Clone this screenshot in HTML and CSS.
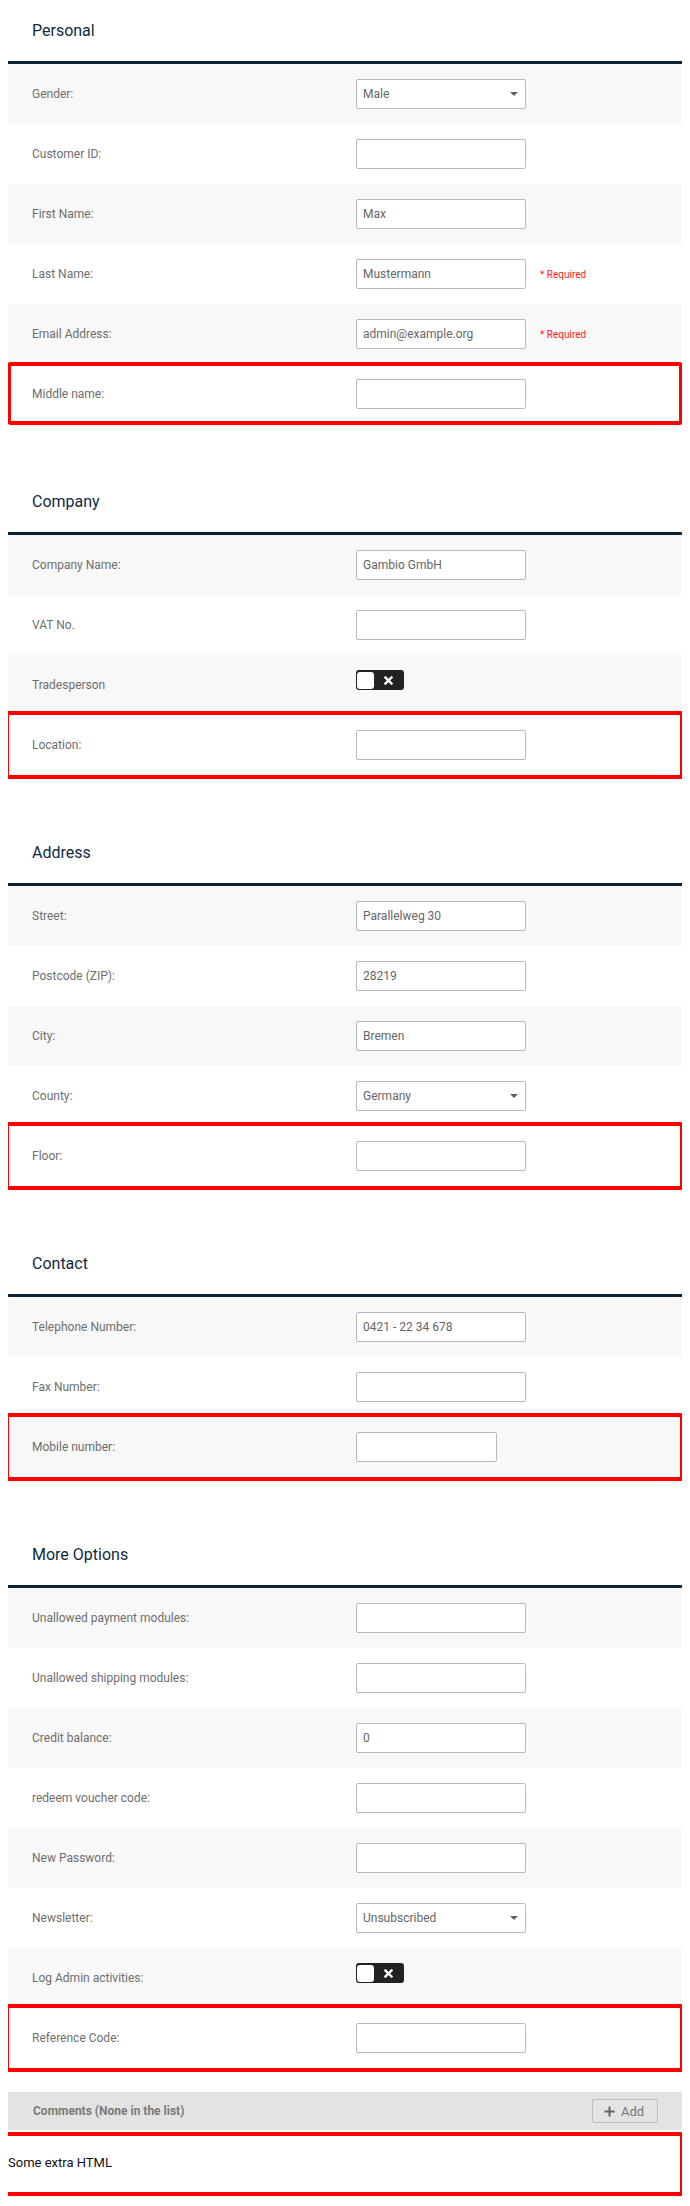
FILE: index.html
```html
<!DOCTYPE html>
<html lang="en">
<head>
<meta charset="utf-8">
<title>Customer</title>
<link rel="stylesheet" href="styles.css">
</head>
<body>
<section class="section">
  <h2 class="section-title">Personal</h2>
  <div class="row gray"><label class="label">Gender:</label><div class="field"><div class="select"><span>Male</span><span class="caret"></span></div></div></div>
  <div class="row"><label class="label">Customer ID:</label><div class="field"><div class="input"></div></div></div>
  <div class="row gray"><label class="label">First Name:</label><div class="field"><div class="input">Max</div></div></div>
  <div class="row"><label class="label">Last Name:</label><div class="field"><div class="input">Mustermann</div><span class="required">* Required</span></div></div>
  <div class="row gray"><label class="label">Email Address:</label><div class="field"><div class="input">admin@example.org</div><span class="required">* Required</span></div></div>
  <div class="row hl hl-a"><label class="label">Middle name:</label><div class="field"><div class="input"></div></div></div>
</section>

<section class="section">
  <h2 class="section-title">Company</h2>
  <div class="row gray"><label class="label">Company Name:</label><div class="field"><div class="input">Gambio GmbH</div></div></div>
  <div class="row"><label class="label">VAT No.</label><div class="field"><div class="input"></div></div></div>
  <div class="row gray"><label class="label">Tradesperson</label><div class="field top"><div class="toggle"><span class="knob"></span><svg class="x" width="9" height="9" viewBox="0 0 9 9"><path d="M1.5 1.5L7.5 7.5M7.5 1.5L1.5 7.5" stroke="#fff" stroke-width="2.4" stroke-linecap="square"/></svg></div></div></div>
  <div class="row hl"><label class="label">Location:</label><div class="field"><div class="input"></div></div></div>
</section>

<section class="section">
  <h2 class="section-title">Address</h2>
  <div class="row gray"><label class="label">Street:</label><div class="field"><div class="input">Parallelweg 30</div></div></div>
  <div class="row"><label class="label">Postcode (ZIP):</label><div class="field"><div class="input">28219</div></div></div>
  <div class="row gray"><label class="label">City:</label><div class="field"><div class="input">Bremen</div></div></div>
  <div class="row"><label class="label">County:</label><div class="field"><div class="select"><span>Germany</span><span class="caret"></span></div></div></div>
  <div class="row hl"><label class="label">Floor:</label><div class="field"><div class="input"></div></div></div>
</section>

<section class="section">
  <h2 class="section-title">Contact</h2>
  <div class="row gray"><label class="label">Telephone Number:</label><div class="field"><div class="input">0421 - 22 34 678</div></div></div>
  <div class="row"><label class="label">Fax Number:</label><div class="field"><div class="input"></div></div></div>
  <div class="row gray hl"><label class="label">Mobile number:</label><div class="field"><div class="input short"></div></div></div>
</section>

<section class="section">
  <h2 class="section-title">More Options</h2>
  <div class="row gray"><label class="label">Unallowed payment modules:</label><div class="field"><div class="input"></div></div></div>
  <div class="row"><label class="label">Unallowed shipping modules:</label><div class="field"><div class="input"></div></div></div>
  <div class="row gray"><label class="label">Credit balance:</label><div class="field"><div class="input">0</div></div></div>
  <div class="row"><label class="label">redeem voucher code:</label><div class="field"><div class="input"></div></div></div>
  <div class="row gray"><label class="label">New Password:</label><div class="field"><div class="input"></div></div></div>
  <div class="row"><label class="label">Newsletter:</label><div class="field"><div class="select"><span>Unsubscribed</span><span class="caret"></span></div></div></div>
  <div class="row gray"><label class="label">Log Admin activities:</label><div class="field top"><div class="toggle"><span class="knob"></span><svg class="x" width="9" height="9" viewBox="0 0 9 9"><path d="M1.5 1.5L7.5 7.5M7.5 1.5L1.5 7.5" stroke="#fff" stroke-width="2.4" stroke-linecap="square"/></svg></div></div></div>
  <div class="row hl"><label class="label">Reference Code:</label><div class="field"><div class="input"></div></div></div>
</section>

<div class="comments">
  <span class="comments-title">Comments (None in the list)</span>
  <button class="add-btn" type="button"><svg width="11" height="11" viewBox="0 0 11 11"><path d="M5.5 0.5V10.5M0.5 5.5H10.5" stroke="#666" stroke-width="2"/></svg><span>Add</span></button>
</div>

<div class="extra">Some extra HTML</div>
</body>
</html>
```

FILE: styles.css
```css
* { box-sizing: border-box; }

body {
  margin: 8px;
  font-family: Roboto, "Liberation Sans", Arial, sans-serif;
  background: #fff;
  color: #666;
}

.section + .section {
  margin-top: 55px;
}

.section-title {
  margin: 0;
  padding: 13px 0 20px 24px;
  font-size: 16px;
  font-weight: 400;
  line-height: 20px;
  color: #0f2a3f;
  border-bottom: 3px solid #0c2336;
}

.row {
  display: grid;
  grid-template-columns: 348px 1fr;
  align-items: center;
  height: 60px;
  background: #fff;
}

.row.gray {
  background: #f8f8f8;
}

.hl {
  position: relative;
}

.hl::after {
  content: "";
  position: absolute;
  top: -4px;
  right: -2px;
  bottom: -4px;
  left: -3px;
  border: 4px solid #ff0000;
  border-radius: 4px;
  pointer-events: none;
  z-index: 2;
}

.hl-a::after {
  top: -2px;
  bottom: -1px;
  left: -1px;
  right: -1px;
}

.label {
  padding-left: 24px;
  font-size: 12px;
  color: #6e6e6e;
}

.field {
  display: flex;
  align-items: center;
  gap: 14px;
}

.field.top {
  align-self: start;
  padding-top: 15px;
}

.input,
.select {
  width: 170px;
  height: 30px;
  border: 1px solid #b8b8b8;
  border-radius: 2px;
  background: #fff;
  padding: 0 6px;
  font-size: 12px;
  line-height: 28px;
  color: #666;
}

.input.short {
  width: 141px;
}

.select {
  display: flex;
  justify-content: space-between;
  align-items: center;
}

.caret {
  width: 0;
  height: 0;
  border-left: 4px solid transparent;
  border-right: 4px solid transparent;
  border-top: 4px solid #5f5f5f;
  margin-right: 1px;
}

.required {
  font-size: 10px;
  color: #ff1a1a;
}

.toggle {
  display: flex;
  align-items: center;
  width: 48px;
  height: 20px;
  background: #222;
  border-radius: 3px;
  padding: 0 1px;
}

.knob {
  width: 17px;
  height: 17px;
  background: #fff;
  border-radius: 3px;
}

.x {
  margin-left: 10px;
}

.comments {
  display: flex;
  align-items: center;
  justify-content: space-between;
  height: 38px;
  margin-top: 24px;
  padding: 0 24px 0 25px;
  background: #e3e3e3;
}

.comments-title {
  font-size: 12px;
  font-weight: 700;
  color: #7a7a7a;
}

.add-btn {
  display: flex;
  align-items: center;
  gap: 6px;
  width: 66px;
  height: 24px;
  padding: 0 0 0 11px;
  border: 1px solid #bdbdbd;
  border-radius: 2px;
  background: transparent;
  font-family: Roboto, "Liberation Sans", Arial, sans-serif;
  font-size: 13px;
  color: #777;
}

.extra {
  margin: 2px -2px 0 -4px;
  padding: 16px 0 17px 0;
  height: 64px;
  border: 4px solid #ff0000;
  border-radius: 4px;
  font-size: 13px;
  line-height: 22px;
  color: #111;
}
```
